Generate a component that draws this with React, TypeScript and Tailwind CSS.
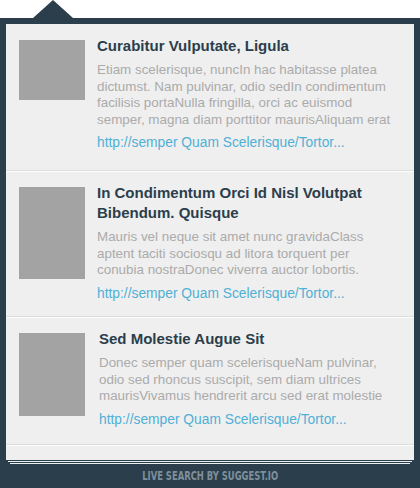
import React from 'react'

interface Result {
  title: string[]
  body: string[]
  url: string
  thumbH: string
  height: string
  textLeft: string
  first?: boolean
}

const results: Result[] = [
  {
    title: ['Curabitur Vulputate, Ligula'],
    body: [
      'Etiam scelerisque, nuncIn hac habitasse platea',
      'dictumst. Nam pulvinar, odio sedIn condimentum',
      'facilisis portaNulla fringilla, orci ac euismod',
      'semper, magna diam porttitor maurisAliquam erat',
    ],
    url: 'http://semper Quam Scelerisque/Tortor...',
    thumbH: 'h-[60px]',
    height: 'h-[147px]',
    textLeft: 'ml-[12px]',
    first: true,
  },
  {
    title: ['In Condimentum Orci Id Nisl Volutpat', 'Bibendum. Quisque'],
    body: [
      'Mauris vel neque sit amet nunc gravidaClass',
      'aptent taciti sociosqu ad litora torquent per',
      'conubia nostraDonec viverra auctor lobortis.',
    ],
    url: 'http://semper Quam Scelerisque/Tortor...',
    thumbH: 'h-[92px]',
    height: 'h-[146px]',
    textLeft: 'ml-[12px]',
  },
  {
    title: ['Sed Molestie Augue Sit'],
    body: [
      'Donec semper quam scelerisqueNam pulvinar,',
      'odio sed rhoncus suscipit, sem diam ultrices',
      'maurisVivamus hendrerit arcu sed erat molestie',
    ],
    url: 'http://semper Quam Scelerisque/Tortor...',
    thumbH: 'h-[83px]',
    height: 'h-[128px]',
    textLeft: 'ml-[14px]',
  },
]

const ResultItem = ({ item }: { item: Result }) => {
  return (
    <div
      className={`flex pl-[13px] border-b border-[#dcdcdc] ${item.height} ${
        item.first ? 'pt-[12px]' : 'border-t border-t-white pt-[11px]'
      }`}
    >
      <div className={`mt-[4px] w-[66px] shrink-0 bg-[#a3a3a3] ${item.thumbH}`} />
      <div className={`${item.textLeft} flex flex-col`}>
        <h3 className="text-[15px] leading-[20px] font-bold text-[#2b3e4c]">
          {item.title.map((t) => (
            <span key={t} className="block whitespace-nowrap">
              {t}
            </span>
          ))}
        </h3>
        <p className="mt-[6px] text-[13.4px] leading-[16.6px] text-[#ababab]">
          {item.body.map((b) => (
            <span key={b} className="block whitespace-nowrap">
              {b}
            </span>
          ))}
        </p>
        <a href="#" className="mt-[7px] text-[13.8px] leading-[16.6px] text-[#4fb0d6] whitespace-nowrap">
          {item.url}
        </a>
      </div>
    </div>
  )
}

export default function App() {
  return (
    <div
      className="w-[420px] h-[488px] bg-white flex flex-col"
      style={{ fontFamily: '"Liberation Sans", Arial, sans-serif' }}
    >
      {/* arrow */}
      <div className="h-[18px] relative">
        <svg className="absolute left-[33px] top-0" width="40" height="18" viewBox="0 0 40 18">
          <polygon points="0,18 20,0 40,18" fill="#2b3e4c" />
        </svg>
      </div>

      <div className="flex-1 bg-[#2b3e4c] flex flex-col pt-[6px]">
        <div className="mx-[6px] bg-[#efefef]">
          {results.map((r) => (
            <ResultItem key={r.title[0]} item={r} />
          ))}
          <div className="h-[15px] border-t border-t-white" />
        </div>
        {/* stacked sheets */}
        <div className="mt-[1px] mx-[8px] h-[1px] bg-[#e9edf0]" />
        <div className="mt-[1px] mx-[10px] h-[1px] bg-[#e9edf0]" />
        <div className="flex-1 flex items-center justify-center">
          <span
            className="inline-block text-[12px] font-bold uppercase text-[#7f909b] scale-x-[0.78]"
            style={{ fontFamily: '"DejaVu Sans Condensed", "DejaVu Sans", sans-serif' }}
          >
            Live Search by Suggest.io
          </span>
        </div>
      </div>
    </div>
  )
}
